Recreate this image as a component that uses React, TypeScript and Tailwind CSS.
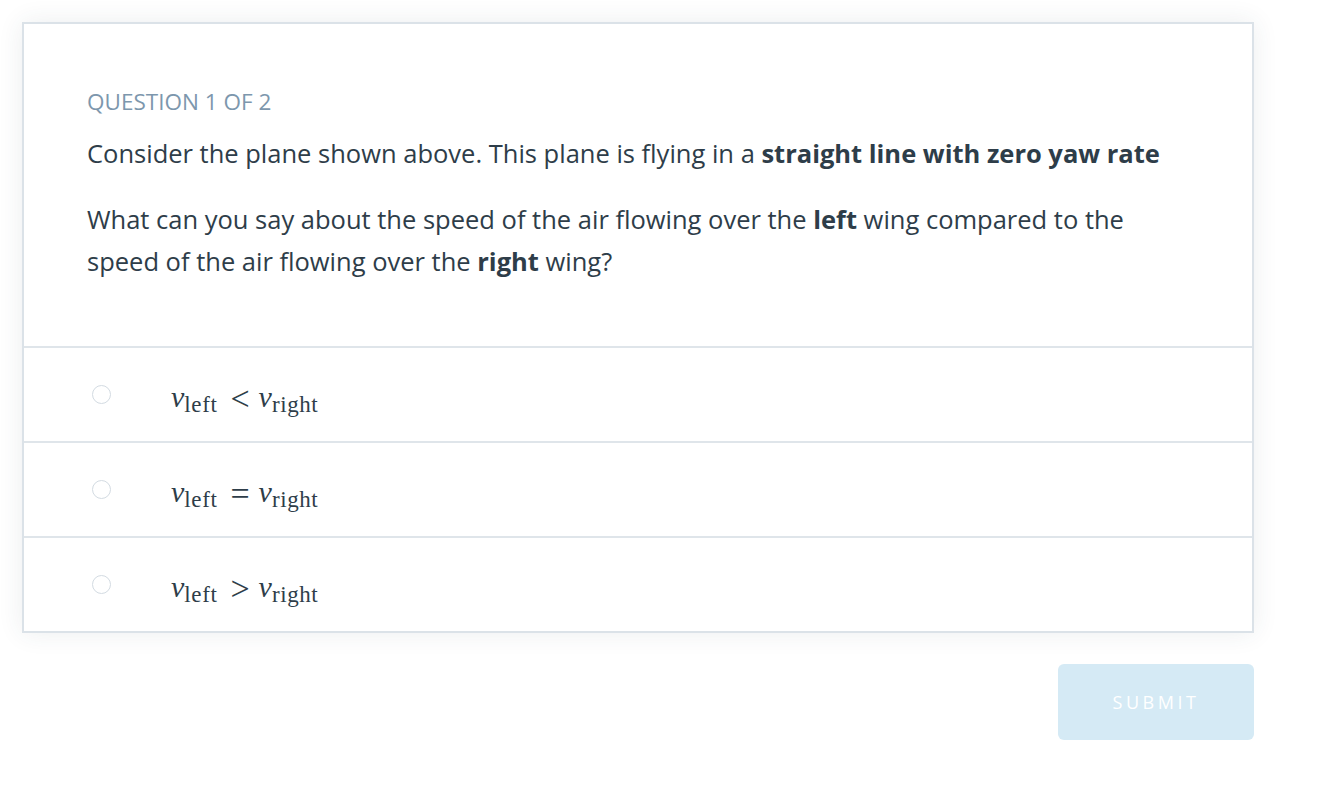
import React from "react";

const sans = { fontFamily: '"Open Sans", "Noto Sans", sans-serif' };
const serif = { fontFamily: '"Liberation Serif", "DejaVu Serif", serif' };

function MathOption({ rel }: { rel: string }) {
  return (
    <span className="flex items-baseline text-[#2e3d49]" style={serif}>
      <span className="italic text-[30px] leading-none">v</span>
      <span className="text-[23px] leading-none tracking-[0.6px] relative top-[5px]">left</span>
      <span className="text-[34px] leading-none ml-[13px] mr-[9px] relative top-[3px]">{rel}</span>
      <span className="italic text-[30px] leading-none">v</span>
      <span className="text-[23px] leading-none tracking-[0.6px] relative top-[5px]">right</span>
    </span>
  );
}

export default function App() {
  const options = ["<", "=", ">"];
  return (
    <div className="min-h-screen bg-white" style={sans}>
      <div className="ml-[22px] pt-[22px] w-[1232px]">
        {/* Question card */}
        <div className="bg-white border-2 border-[#dbe2e8] shadow-[0_0_24px_rgba(46,61,73,0.09)]">
          <div className="px-[63px] pt-[64px] pb-[64px]">
            <p className="text-[#7d97ad] text-[22.5px] leading-[28px] uppercase">Question 1 of 2</p>
            <p className="mt-[16px] text-[#2e3d49] text-[25.5px] leading-[42px]">
              Consider the plane shown above. This plane is flying in a <b className="font-bold">straight line with zero yaw rate</b>
            </p>
            <p className="mt-[24px] text-[#2e3d49] text-[25.5px] leading-[42px]">
              What can you say about the speed of the air flowing over the <b className="font-bold">left</b> wing compared to the speed of the air flowing over the <b className="font-bold">right</b> wing?
            </p>
          </div>
          {options.map((rel) => (
            <div key={rel} className="border-t-2 border-[#dfe5ea] h-[95px] flex items-center">
              <span className="ml-[68px] w-[19px] h-[19px] rounded-full border-[1.5px] border-[#d3dbe2] shrink-0" />
              <span className="ml-[60px] relative top-[1px]">
                <MathOption rel={rel} />
              </span>
            </div>
          ))}
        </div>

        {/* Submit */}
        <div className="flex justify-end mt-[31px]">
          <button className="w-[196px] h-[76px] rounded-[6px] bg-[#d5eaf5] text-white text-[18px] tracking-[3.5px] uppercase">
            Submit
          </button>
        </div>
      </div>
    </div>
  );
}
